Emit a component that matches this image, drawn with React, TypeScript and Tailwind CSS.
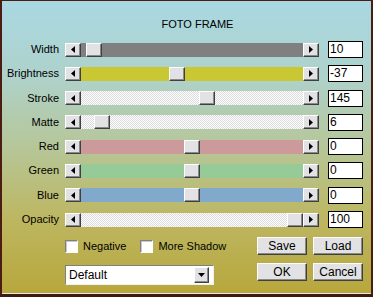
import React from "react";

const rows = [
  { label: "Width", value: "10", track: "bg-[#808080]", thumb: 86 - 81 },
  { label: "Brightness", value: "-37", track: "bg-[#c9c832]", thumb: 169 - 81 },
  { label: "Stroke", value: "145", track: "dither", thumb: 199 - 81 },
  { label: "Matte", value: "6", track: "dither", thumb: 94 - 81 },
  { label: "Red", value: "0", track: "bg-[#cc9a9a]", thumb: 184 - 81 },
  { label: "Green", value: "0", track: "bg-[#96ca96]", thumb: 184 - 81 },
  { label: "Blue", value: "0", track: "bg-[#80a9cc]", thumb: 184 - 81 },
  { label: "Opacity", value: "100", track: "dither", thumb: 287 - 81 },
];

const raised =
  "bg-[#e2e2e4] border border-t-white border-l-white border-r-[#404040] border-b-[#404040] shadow-[inset_-1px_-1px_0_#8a8a8a]";

function ArrowBtn({ dir }: { dir: "l" | "r" }) {
  return (
    <div className={`w-[16px] h-[14px] flex items-center justify-center shrink-0 ${raised}`}>
      <svg width="4" height="7" viewBox="0 0 4 7">
        {dir === "l" ? <path d="M4 0 L0 3.5 L4 7 Z" fill="#000" /> : <path d="M0 0 L4 3.5 L0 7 Z" fill="#000" />}
      </svg>
    </div>
  );
}

function Slider({ track, thumb }: { track: string; thumb: number }) {
  const trackCls =
    track === "dither"
      ? "bg-white bg-[image:repeating-conic-gradient(#ffffff_0_25%,#dadada_0_50%)] bg-[length:2px_2px]"
      : track;
  return (
    <div className="flex w-[254px] h-[14px]">
      <ArrowBtn dir="l" />
      <div className={`relative flex-1 h-full ${trackCls}`}>
        <div className={`absolute top-0 w-[16px] h-[14px] ${raised}`} style={{ left: thumb }} />
      </div>
      <ArrowBtn dir="r" />
    </div>
  );
}

function Checkbox({ label }: { label: string }) {
  return (
    <div className="flex items-center gap-[5px] whitespace-nowrap">
      <div className="w-[13px] h-[13px] shrink-0 bg-white border border-t-[#808080] border-l-[#808080] border-r-white border-b-white shadow-[inset_1px_1px_0_#c8c8c8]" />
      <span>{label}</span>
    </div>
  );
}

function Button({ label }: { label: string }) {
  return (
    <div className={`w-[50px] h-[18px] flex items-center justify-center ${raised}`}>
      <span className="text-[12px]">{label}</span>
    </div>
  );
}

export default function App() {
  return (
    <div
      className="w-[373px] h-[297px] overflow-hidden border-t border-l-2 border-r-2 border-b-[3px] border-t-[#4b1d12] border-l-[#4b1d12] border-r-[#4b1d12] border-b-[#3e1a10] bg-[linear-gradient(180deg,#a9d8e2_0%,#aed2cc_25%,#b6c698_50%,#bdb660_75%,#b7a73c_100%)] text-black text-[11px] leading-[13px] flex flex-col"
      style={{ fontFamily: '"Liberation Sans", Arial, sans-serif' }}
    >
      <div className="h-[13px] mt-[17px] text-center pl-[22px]">FOTO FRAME</div>
      <div className="mt-[10px] flex flex-col gap-[7.3px]">
        {rows.map((r) => (
          <div key={r.label} className="flex items-center h-[17px]">
            <div className="w-[57px] text-right">{r.label}</div>
            <div className="ml-[6px]">
              <Slider track={r.track} thumb={r.thumb} />
            </div>
            <div className="ml-[9px] w-[35px] h-[17px] bg-white border border-black pl-[1px] text-[12px] leading-[15px]">
              {r.value}
            </div>
          </div>
        ))}
      </div>
      <div className="flex mt-[9px] border-b border-b-[#e8e4f0] flex-1">
        <div className="ml-[63px] w-[149px] shrink-0 flex flex-col">
          <div className="flex gap-[14px] mt-[3px] text-[11px]">
            <Checkbox label="Negative" />
            <Checkbox label="More Shadow" />
          </div>
          <div className="mt-[12px] w-[149px] h-[20px] bg-white border border-t-[#808080] border-l-[#808080] border-r-[#f0f0f0] border-b-[#f0f0f0] flex items-center justify-between pl-[3px] pr-[4px]">
            <span className="text-[12px]">Default</span>
            <div className={`w-[15px] h-[16px] flex items-center justify-center ${raised}`}>
              <svg width="7" height="4" viewBox="0 0 7 4">
                <path d="M0 0 L7 0 L3.5 4 Z" fill="#000" />
              </svg>
            </div>
          </div>
        </div>
        <div className="ml-[43px] grid grid-cols-[50px_50px] gap-x-[6px] gap-y-[8px] content-start">
          <Button label="Save" />
          <Button label="Load" />
          <Button label="OK" />
          <Button label="Cancel" />
        </div>
      </div>
    </div>
  );
}
